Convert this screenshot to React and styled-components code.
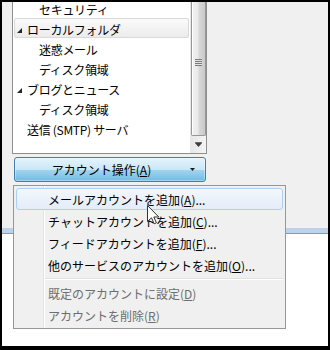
import React from "react";
import styled, { createGlobalStyle, css } from "styled-components";

const Global = createGlobalStyle`
  html, body {
    margin: 0;
    padding: 0;
    background: #000;
  }
  body {
    font-family: "Noto Sans CJK JP", "Noto Sans", sans-serif;
  }
`;

const Frame = styled.div`
  width: 330px;
  height: 350px;
  box-sizing: border-box;
  padding: 2px 2px 4px 2px;
  background: #000;
`;

const Screen = styled.div`
  position: relative;
  width: 100%;
  height: 100%;
  background: #fff;
  overflow: hidden;
  display: flex;
  flex-direction: column;
`;

const Dialog = styled.div`
  height: 226px;
  box-sizing: border-box;
  background: #f0f0f0;
  padding-left: 10px;
  display: flex;
  flex-direction: column;
  gap: 3px;
`;

const FrameEdge = styled.div`
  height: 5px;
  background: #bcd3eb;
  border-bottom: 1px solid #3ab6e3;
`;

const ListBox = styled.div`
  width: 195px;
  height: 152px;
  box-sizing: border-box;
  border: 1px solid #8e8f8f;
  border-top: none;
  background: #fff;
  display: flex;
  overflow: hidden;
`;

const TreeArea = styled.div`
  flex: 1;
  overflow: hidden;
`;

const Rows = styled.div`
  margin-top: -4px;
  display: flex;
  flex-direction: column;
`;

const Row = styled.div`
  height: 20px;
  box-sizing: border-box;
  margin: 0 1px;
  padding-top: 2px;
  padding-left: ${({ $indent }) => 2 + $indent}px;
  display: flex;
  align-items: center;
  border: 1px solid transparent;
  border-radius: 2px;
  font-size: 12px;
  letter-spacing: -0.3px;
  white-space: nowrap;
  color: #000;
  ${({ $hover }) =>
    $hover &&
    css`
      border-color: #d9d9d9;
      background: linear-gradient(to bottom, #fafafa, #ececec);
    `}
`;

const Expander = styled.span`
  width: 5px;
  height: 5px;
  margin: 2px 5px 0 0;
  display: flex;
  flex: none;
`;

const Scrollbar = styled.div`
  width: 16px;
  flex: none;
  display: flex;
  flex-direction: column;
  background: linear-gradient(to right, #e6e6e6, #f4f4f4);
`;

const Thumb = styled.div`
  height: 134px;
  flex: none;
  margin-left: 1px;
  box-sizing: border-box;
  border: 1px solid #979797;
  border-top: none;
  border-radius: 0 0 2px 2px;
  padding-top: 57px;
  display: flex;
  justify-content: center;
  align-items: flex-start;
  background: linear-gradient(
    to right,
    #f1f1f1 0%,
    #eaeaea 45%,
    #d8d8d8 55%,
    #c9c9c9 100%
  );
  box-shadow: inset 1px 0 0 #fff;
`;

const Grip = styled.div`
  width: 7px;
  height: 7px;
  background: repeating-linear-gradient(
    to bottom,
    #7a7a7a 0 1px,
    #e4e4e4 1px 2px
  );
`;

const ArrowBtn = styled.div`
  height: 17px;
  display: flex;
  align-items: center;
  justify-content: center;
  padding-left: 1px;
`;

const Button = styled.div`
  margin-left: 2px;
  width: 192px;
  height: 25px;
  box-sizing: border-box;
  border: 1px solid #3c7fb1;
  border-radius: 3px;
  display: flex;
  align-items: center;
  font-size: 12px;
  color: #000;
  background: linear-gradient(
    to bottom,
    #e5f4fc 0%,
    #c9e7f7 50%,
    #a3d6f2 50%,
    #72bbe2 100%
  );
  box-shadow: inset 0 0 0 1px rgba(255, 255, 255, 0.35);
`;

const ButtonLabel = styled.span`
  flex: 1;
  text-align: center;
  white-space: nowrap;
`;

const Caret = styled.span`
  width: 17px;
  display: flex;
  padding-left: 2px;
  box-sizing: border-box;
`;

const Menu = styled.div`
  position: absolute;
  left: 11px;
  top: 183px;
  width: 273px;
  box-sizing: border-box;
  border: 1px solid #979797;
  padding: 2px;
  background-color: #f0f0f0;
  background-image: linear-gradient(
    to right,
    transparent 29px,
    #e2e3e3 29px,
    #e2e3e3 30px,
    #fff 30px,
    #fff 31px,
    transparent 31px
  );
  display: flex;
  flex-direction: column;
`;

const MenuItem = styled.div`
  height: 22px;
  box-sizing: border-box;
  padding-left: 31px;
  display: flex;
  align-items: center;
  border: 1px solid transparent;
  border-radius: 3px;
  font-size: 12px;
  white-space: nowrap;
  color: ${({ $disabled }) => ($disabled ? "#6d6d6d" : "#000")};
  ${({ $active }) =>
    $active &&
    css`
      border-color: #aecff7;
      background: linear-gradient(to bottom, #f3f7fd, #e3ecf9);
    `}
`;

const Separator = styled.div`
  height: 6px;
  margin-left: 29px;
  display: flex;
  align-items: center;
  &::before {
    content: "";
    flex: 1;
    height: 1px;
    background: #e0e0e0;
    border-bottom: 1px solid #fff;
  }
`;

const Cursor = styled.svg`
  position: absolute;
  left: 145px;
  top: 203px;
`;

const tree = [
  { label: "セキュリティ", indent: 12 },
  { label: "ローカルフォルダ", indent: 0, open: true, hover: true },
  { label: "迷惑メール", indent: 12 },
  { label: "ディスク領域", indent: 12 },
  { label: "ブログとニュース", indent: 0, open: true },
  { label: "ディスク領域", indent: 12 },
  { label: "送信 (SMTP) サーバ", indent: 0 },
];

const menu = [
  { text: "メールアカウントを追加", key: "A", dots: true, active: true },
  { text: "チャットアカウントを追加", key: "C", dots: true },
  { text: "フィードアカウントを追加", key: "F", dots: true },
  { text: "他のサービスのアカウントを追加", key: "O", dots: true },
  { sep: true },
  { text: "既定のアカウントに設定", key: "D", disabled: true },
  { text: "アカウントを削除", key: "R", disabled: true },
];

export default function App() {
  return (
    <Frame>
      <Global />
      <Screen>
        <Dialog>
          <ListBox>
            <TreeArea>
              <Rows>
                {tree.map((t, i) => (
                  <Row key={i} $indent={t.indent} $hover={t.hover}>
                    <Expander>
                      {t.open && (
                        <svg width="5" height="5" viewBox="0 0 5 5">
                          <polygon points="5,0 5,5 0,5" fill="#262626" />
                        </svg>
                      )}
                    </Expander>
                    {t.label}
                  </Row>
                ))}
              </Rows>
            </TreeArea>
            <Scrollbar>
              <Thumb>
                <Grip />
              </Thumb>
              <ArrowBtn>
                <svg width="7" height="5" viewBox="0 0 7 5">
                  <rect x="0" y="0" width="7" height="1" fill="#6a6a6a" />
                  <polygon points="0,1 7,1 3.5,5" fill="#3d3d3d" />
                </svg>
              </ArrowBtn>
            </Scrollbar>
          </ListBox>
          <Button>
            <ButtonLabel>
              アカウント操作(<u>A</u>)
            </ButtonLabel>
            <Caret>
              <svg width="5" height="3" viewBox="0 0 5 3">
                <polygon points="0,0 5,0 2.5,3" fill="#1c1c1c" />
              </svg>
            </Caret>
          </Button>
        </Dialog>
        <FrameEdge />
        <Menu>
          {menu.map((m, i) =>
            m.sep ? (
              <Separator key={i} />
            ) : (
              <MenuItem key={i} $active={m.active} $disabled={m.disabled}>
                {m.text}(<u>{m.key}</u>){m.dots ? "..." : ""}
              </MenuItem>
            )
          )}
        </Menu>
        <Cursor width="13" height="20" viewBox="0 0 13 20">
          <path
            d="M0.5 0.5 L0.5 16.5 L4.5 12.8 L7.2 18.8 L9.4 17.8 L6.8 12 L11.8 12 Z"
            fill="#fff"
            stroke="#333"
            strokeWidth="1"
            strokeLinejoin="round"
          />
        </Cursor>
      </Screen>
    </Frame>
  );
}
